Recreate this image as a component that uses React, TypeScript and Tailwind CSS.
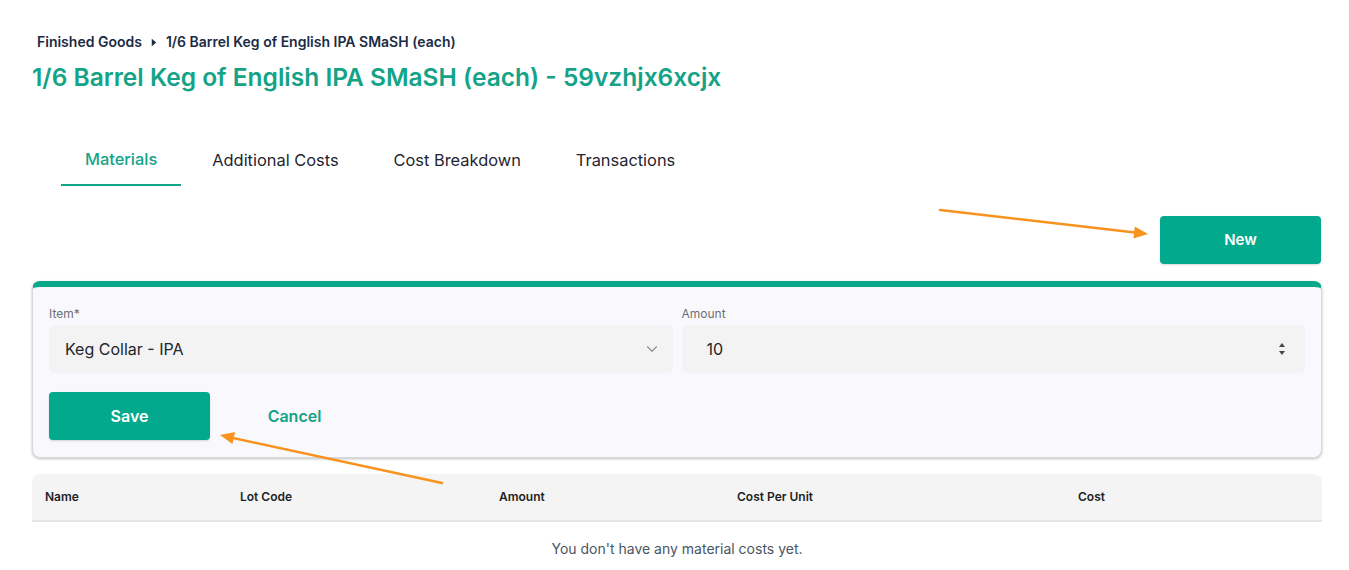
import { ChevronDown } from "lucide-react";

const tabs = ["Materials", "Additional Costs", "Cost Breakdown", "Transactions"];
const columns = ["Name", "Lot Code", "Amount", "Cost Per Unit", "Cost"];

function Arrows() {
  return (
    <svg
      aria-hidden="true"
      className="pointer-events-none absolute left-0 top-0"
      width={1349}
      height={570}
    >
      <g stroke="#f7931e" strokeWidth={2.5} strokeLinecap="round" fill="none">
        <line x1={940} y1={210} x2={1135} y2={232.5} />
        <line x1={442} y1={483} x2={233} y2={438} />
      </g>
      <g fill="#f7931e">
        <polygon points="1148,234 1133.4,238.6 1134.8,226.4" />
        <polygon points="220,435 235,432 232.4,444" />
      </g>
    </svg>
  );
}

export default function App() {
  return (
    <div className="relative min-h-[570px] bg-white pl-8 pr-[27px] font-['Inter',sans-serif] text-[#1f2937]">
      <nav aria-label="Breadcrumb" className="flex items-center pl-[5px] pt-[33px] text-[14px] font-semibold leading-[18px] text-[#1b2b45]">
        <span>Finished Goods</span>
        <svg viewBox="0 0 8 10" className="mx-[9px] h-[9px] w-[6px]" aria-hidden="true">
          <path d="M1 0 L7 5 L1 10 Z" fill="#1b2b45" />
        </svg>
        <span>1/6 Barrel Keg of English IPA SMaSH (each)</span>
      </nav>

      <h1 className="mt-[10px] text-[24.5px] font-semibold leading-[32px] text-[#14a386]">
        1/6 Barrel Keg of English IPA SMaSH (each) - 59vzhjx6xcjx
      </h1>

      <div className="ml-[29px] mt-[43px] flex gap-[7px]">
        {tabs.map((t, i) => (
          <button
            key={t}
            type="button"
            className={`flex h-[50px] items-center px-6 pb-[2px] text-[16.4px] ${
              i === 0
                ? "border-b-2 border-[#14a386] pb-0 font-medium text-[#14a386]"
                : "text-[#1f2430]"
            }`}
          >
            {t}
          </button>
        ))}
      </div>

      <div className="mt-[30px] flex justify-end pr-px">
        <button
          type="button"
          className="h-12 w-[161px] rounded bg-[#02a98c] text-[15px] font-semibold text-white shadow-[0_1px_2px_rgba(0,0,0,0.15)]"
        >
          New
        </button>
      </div>

      <div className="mt-[17px] rounded-lg border border-[#d6d8de] border-t-[6px] border-t-[#0aa88a] bg-[#f9f9fd] px-4 pb-[17px] pt-[19px] shadow-[0_1px_3px_rgba(0,0,0,0.25)]">
        <div className="grid grid-cols-2 gap-[9px]">
          <label className="flex flex-col">
            <span className="text-[12px] leading-4 text-[#6b6f76]">Item*</span>
            <div className="mt-[3px] flex h-12 items-center justify-between rounded-md bg-[#f3f3f4] pl-4 pr-3">
              <span className="text-[16px] text-[#22252b]">Keg Collar - IPA</span>
              <ChevronDown aria-hidden="true" className="size-[18px] text-[#8a8d93]" strokeWidth={1.5} />
            </div>
          </label>
          <label className="flex flex-col">
            <span className="text-[12px] leading-4 text-[#6b6f76]">Amount</span>
            <div className="mt-[3px] flex h-12 items-center justify-between rounded-md bg-[#f3f3f4] pl-[25px] pr-[19px]">
              <span className="text-[16px] text-[#22252b]">10</span>
              <svg viewBox="0 0 8 14" className="h-[14px] w-2" aria-hidden="true">
                <path d="M4 1 L7 5 L1 5 Z M4 13 L7 9 L1 9 Z" fill="#444" />
              </svg>
            </div>
          </label>
        </div>

        <div className="mt-[19px] flex items-center gap-1">
          <button
            type="button"
            className="h-12 w-[161px] rounded bg-[#02a98c] text-[16px] font-semibold text-white shadow-[0_1px_2px_rgba(0,0,0,0.15)]"
          >
            Save
          </button>
          <button type="button" className="h-12 w-[161px] text-[16px] font-semibold text-[#14a386]">
            Cancel
          </button>
        </div>
      </div>

      <div className="mt-4">
        <div className="grid h-12 grid-cols-[195px_259px_238px_341px_1fr] items-center rounded-t-lg border-b-2 border-[#e6e6e6] bg-[#f4f4f4] pl-[13px] text-[12px] font-semibold text-[#1d1f24]">
          {columns.map((c) => (
            <span key={c}>{c}</span>
          ))}
        </div>
        <p className="pt-[17px] text-center text-[14px] leading-5 text-[#4b5563]">
          You don't have any material costs yet.
        </p>
      </div>

      <Arrows />
    </div>
  );
}
